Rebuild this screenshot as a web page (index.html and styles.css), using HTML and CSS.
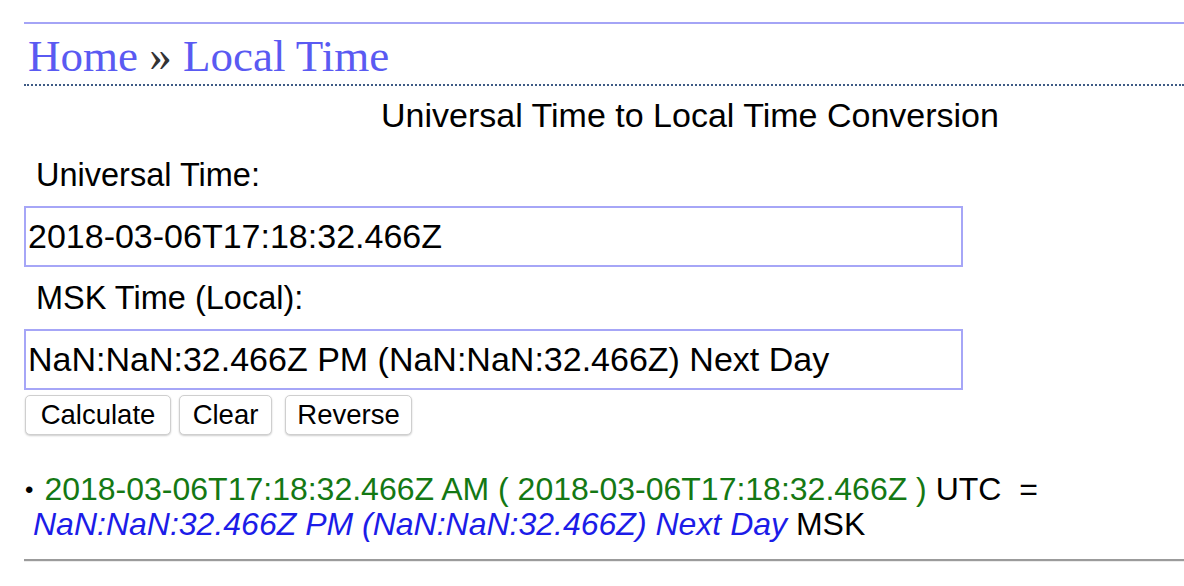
FILE: index.html
```html
<!DOCTYPE html>
<html>
<head>
<meta charset="utf-8">
<title>Local Time</title>
<link rel="stylesheet" href="styles.css">
</head>
<body>
<div class="page">
  <div class="masthead"><span class="masthead-text">Universal Time Converter Tools</span></div>
  <nav class="crumbs"><a href="#" class="crumb">Home</a> <span class="sep">»</span> <a href="#" class="crumb">Local Time</a></nav>
  <h2 class="title">Universal Time to Local Time Conversion</h2>
  <form class="conv">
    <label class="lbl">Universal Time:</label>
    <input class="field" type="text" value="2018-03-06T17:18:32.466Z">
    <label class="lbl">MSK Time (Local):</label>
    <input class="field" type="text" value="NaN:NaN:32.466Z PM (NaN:NaN:32.466Z) Next Day">
    <div class="buttons">
      <button type="button" class="btn btn-calc">Calculate</button>
      <button type="button" class="btn btn-clear">Clear</button>
      <button type="button" class="btn btn-rev">Reverse</button>
    </div>
  </form>
  <div class="result">
    <span class="bullet">•</span><span class="utc">2018-03-06T17:18:32.466Z AM ( 2018-03-06T17:18:32.466Z )</span> UTC &nbsp;=<br>
    <span class="local">NaN:NaN:32.466Z PM (NaN:NaN:32.466Z) Next Day</span> MSK
  </div>
  <hr class="divider">
</div>
</body>
</html>
```
FILE: styles.css
```css
html, body {
  margin: 0;
  padding: 0;
  background: #fff;
  overflow: hidden;
}
body {
  font-family: "Liberation Sans", Arial, sans-serif;
  color: #000;
}
.page {
  padding-left: 24px;
}
.masthead {
  height: 22px;
  overflow: hidden;
  border-bottom: 2px solid #a4a4f6;
}
.masthead-text {
  display: block;
  margin-top: -44px;
  margin-left: 18px;
  font-size: 44px;
  line-height: 44px;
  font-weight: bold;
  color: #fbfbfb;
  text-shadow: 0 1px 4px rgba(0,0,0,0.25);
  white-space: nowrap;
}
.crumbs {
  font-family: "Liberation Serif", "Times New Roman", serif;
  font-size: 45px;
  line-height: 56px;
  padding: 4px 0 0 4px;
  height: 62px;
  box-sizing: border-box;
  border-bottom: 2px dotted #3f5b85;
  white-space: nowrap;
}
.crumb {
  color: #5a5af2;
  text-decoration: none;
}
.sep {
  color: #333;
}
.title {
  margin: 0;
  font-weight: normal;
  font-size: 34px;
  line-height: 58px;
  padding-left: 357px;
  white-space: nowrap;
}
.conv {
  display: flex;
  flex-direction: column;
  align-items: flex-start;
}
.lbl {
  font-size: 32.5px;
  line-height: 40px;
  padding: 11px 0 0 12px;
  margin-bottom: 11px;
}
.field {
  width: 939px;
  height: 61px;
  box-sizing: border-box;
  border: 2px solid #a6a6f7;
  padding: 0 2px;
  font-family: "Liberation Sans", Arial, sans-serif;
  font-size: 34px;
  color: #000;
  outline: none;
  margin: 0;
}
.buttons {
  display: flex;
  margin-top: 5px;
  padding-left: 1px;
}
.btn {
  font-family: "Liberation Sans", Arial, sans-serif;
  font-size: 27.5px;
  height: 40px;
  padding: 0;
  background: #fff;
  border: 1px solid #cfcfcf;
  border-radius: 5px;
  box-shadow: 0 1px 2px rgba(0,0,0,0.2);
  color: #000;
  text-align: center;
}
.btn-calc {
  width: 146px;
  margin-right: 8px;
}
.btn-clear {
  width: 93px;
  margin-right: 13px;
}
.btn-rev {
  width: 127px;
}
.result {
  margin-top: 37px;
  font-size: 32px;
  line-height: 35px;
  padding-left: 1px;
  white-space: nowrap;
}
.bullet {
  display: inline-block;
  font-size: 24px;
  vertical-align: 2px;
  margin-right: 11px;
}
.utc {
  color: #147814;
}
.local {
  color: #1c1ce8;
  font-style: italic;
  padding-left: 8px;
}
.divider {
  margin: 17px 0 0 0;
  border: 0;
  border-top: 2px solid #9b9b9b;
  border-bottom: 1px solid #ececec;
  height: 0;
}
```
